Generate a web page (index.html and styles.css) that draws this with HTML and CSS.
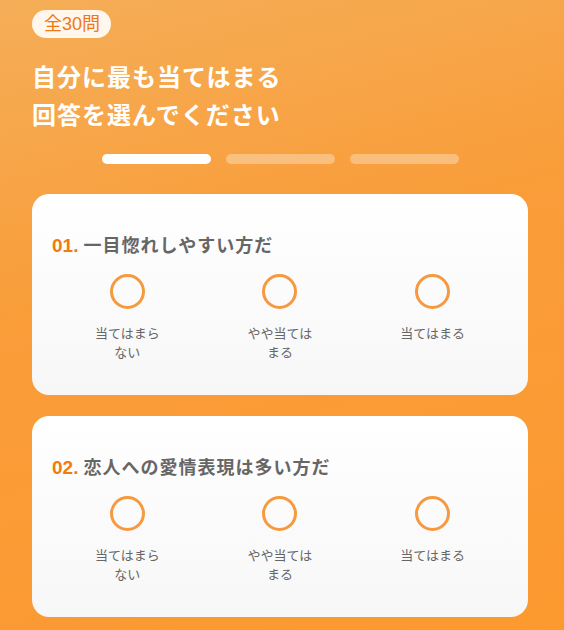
FILE: index.html
```html
<!DOCTYPE html>
<html lang="ja">
<head>
<meta charset="utf-8">
<title>診断</title>
<link rel="stylesheet" href="styles.css">
</head>
<body>
<div class="page">
  <div class="badge">全30問</div>
  <h1 class="title">自分に最も当てはまる<br>回答を選んでください</h1>
  <div class="progress">
    <span class="bar active"></span>
    <span class="bar"></span>
    <span class="bar"></span>
  </div>

  <section class="card">
    <h2 class="question"><span class="num">01.</span> 一目惚れしやすい方だ</h2>
    <div class="options">
      <label class="option"><span class="radio"></span><span class="label">当てはまらない</span></label>
      <label class="option"><span class="radio"></span><span class="label">やや当てはまる</span></label>
      <label class="option"><span class="radio"></span><span class="label">当てはまる</span></label>
    </div>
  </section>

  <section class="card">
    <h2 class="question"><span class="num">02.</span> 恋人への愛情表現は多い方だ</h2>
    <div class="options">
      <label class="option"><span class="radio"></span><span class="label">当てはまらない</span></label>
      <label class="option"><span class="radio"></span><span class="label">やや当てはまる</span></label>
      <label class="option"><span class="radio"></span><span class="label">当てはまる</span></label>
    </div>
  </section>
</div>
</body>
</html>
```
FILE: styles.css
```css
html, body {
  margin: 0;
  padding: 0;
}
body {
  min-height: 630px;
  background: linear-gradient(165deg, #f5ae58 0%, #f99d3a 40%, #fc992f 100%);
  font-family: "Noto Sans CJK JP", "Noto Sans", sans-serif;
  overflow: hidden;
}
.page {
  width: 496px;
  margin-left: 32px;
  padding-top: 10px;
}
.badge {
  display: inline-block;
  height: 28px;
  line-height: 28px;
  padding: 0 11px 0 12px;
  border-radius: 14px;
  background: #fff6ec;
  color: #ef7816;
  font-family: "Liberation Sans", "Noto Sans CJK JP", sans-serif;
  font-size: 18px;
}
.title {
  margin: 19px 0 0;
  color: #ffffff;
  font-size: 24px;
  font-weight: 700;
  line-height: 38px;
  letter-spacing: 1px;
}
.progress {
  display: flex;
  justify-content: center;
  gap: 15px;
  margin-top: 21px;
}
.bar {
  display: block;
  width: 109px;
  height: 10px;
  border-radius: 5px;
  background: rgba(255, 255, 255, 0.32);
}
.bar.active {
  background: #ffffff;
}
.card {
  margin-top: 30px;
  padding: 37px 19px 34px;
  border-radius: 17px;
  background: linear-gradient(180deg, #ffffff 0%, #f7f7f7 100%);
}
.card + .card {
  margin-top: 21px;
}
.question {
  height: 27px;
  margin: 0 0 0 1px;
  font-size: 18px;
  font-weight: 700;
  line-height: 27px;
  letter-spacing: 1px;
  color: #666666;
}
.num {
  font-family: "Liberation Sans", sans-serif;
  font-size: 19px;
  font-weight: 700;
  line-height: 1;
  color: #f47a0f;
  letter-spacing: 0;
}
.options {
  display: grid;
  grid-template-columns: repeat(3, 1fr);
  margin-top: 16px;
}
.option {
  display: flex;
  flex-direction: column;
  align-items: center;
}
.radio {
  display: block;
  width: 35px;
  height: 35px;
  box-sizing: border-box;
  border: 3px solid #f7993f;
  border-radius: 50%;
}
.label {
  display: block;
  width: 70px;
  margin-top: 14px;
  font-size: 13px;
  line-height: 19px;
  color: #666666;
  text-align: center;
}
```
